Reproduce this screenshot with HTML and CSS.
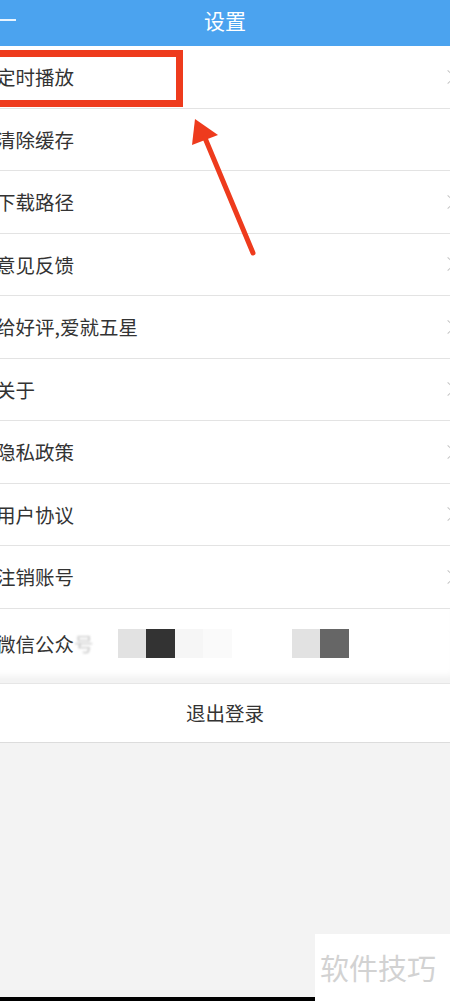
FILE: index.html
```html
<!doctype html>
<html>
    <head>
        <title>设置</title>
        <meta charset="utf-8">
        <link rel="stylesheet" href="styles.css">
    </head>
    <body>
        <div class="screen">
            <div class="topbar">
                <span class="back"></span>
                <h1>设置</h1>
                <span></span>
            </div>
            <ul class="menu">
                <li class="item">定时播放<span class="chev"></span></li>
                <li class="item">清除缓存</li>
                <li class="item">下载路径<span class="chev"></span></li>
                <li class="item">意见反馈<span class="chev"></span></li>
                <li class="item">给好评,爱就五星<span class="chev"></span></li>
                <li class="item">关于<span class="chev"></span></li>
                <li class="item">隐私政策<span class="chev"></span></li>
                <li class="item">用户协议<span class="chev"></span></li>
                <li class="item">注销账号<span class="chev"></span></li>
                <li class="item wechat">
                    <span>微信公众<span class="fade">号</span></span>
                    <span class="mosaic">
                        <i class="m1"></i><i class="m2"></i><i class="m3"></i><i class="m4"></i>
                        <i class="gap"></i>
                        <i class="m1"></i><i class="m5"></i>
                    </span>
                </li>
            </ul>
            <div class="logout">退出登录</div>

            <!-- annotation drawn over the screenshot -->
            <div class="mark"></div>
            <svg class="arrow" width="80" height="150" viewBox="180 110 80 150">
                <polygon points="195,119 192,145 218,135" fill="#ee3b1d"/>
                <line x1="205" y1="138" x2="253" y2="253" stroke="#ee3b1d" stroke-width="5" stroke-linecap="round"/>
            </svg>

            <div class="stamp">软件技巧</div>
            <div class="bar"></div>
        </div>
    </body>
</html>
```

FILE: styles.css
```css
body {
    margin: 0;
    font-family: "Noto Sans CJK SC", "Noto Sans", sans-serif;
}

.screen {
    position: relative;
    width: 450px;
    height: 1001px;
    overflow: hidden;
    background: #f3f3f3;
}

.topbar {
    display: grid;
    grid-template-columns: 1fr auto 1fr;
    align-items: center;
    height: 46px;
    padding-bottom: 6px;
    box-sizing: border-box;
    background: #4ba3ef;
}

.topbar h1 {
    margin: 0;
    color: #fff;
    font-size: 21px;
    font-weight: normal;
    line-height: 1;
}

.back {
    display: block;
    width: 16px;
    height: 2px;
    background: #e8f4ff;
}

.menu {
    margin: 0;
    padding: 0;
    list-style: none;
    background: #fff;
}

.item {
    display: flex;
    align-items: center;
    justify-content: space-between;
    height: 62.5px;
    box-sizing: border-box;
    margin-left: -4px;
    border-bottom: 1px solid #e3e3e3;
    color: #333;
    font-size: 19.5px;
}

.chev {
    width: 9px;
    height: 9px;
    margin-right: 0;
    border-top: 1.5px solid #c4c4c4;
    border-right: 1.5px solid #c4c4c4;
    transform: translateX(3px) rotate(45deg);
}

.wechat {
    justify-content: flex-start;
    height: 70px;
    border-bottom: none;
    box-shadow: inset 0 -8px 8px -6px #eee;
}

.fade {
    color: #c8c8c8;
    filter: blur(1px);
}

.mosaic {
    display: flex;
    margin-left: 24px;
}

.mosaic i {
    display: block;
    width: 28.5px;
    height: 29px;
}

.mosaic .m1 { background: #e2e2e2; }
.mosaic .m2 { background: #333; }
.mosaic .m3 { background: #f6f6f6; }
.mosaic .m4 { background: #fafafa; }
.mosaic .m5 { background: #666; }
.mosaic .gap { width: 60px; }

.logout {
    display: flex;
    align-items: center;
    justify-content: center;
    height: 60px;
    margin-top: 4px;
    background: #fff;
    border-top: 1px solid #e6e6e6;
    border-bottom: 1px solid #dcdcdc;
    box-sizing: border-box;
    color: #333;
    font-size: 19.5px;
}

.mark {
    position: absolute;
    left: -10px;
    top: 50px;
    width: 193px;
    height: 57px;
    box-sizing: border-box;
    border: 7px solid #ee3b1d;
}

.arrow {
    position: absolute;
    left: 180px;
    top: 110px;
}

.stamp {
    position: absolute;
    left: 315px;
    top: 934px;
    width: 135px;
    height: 67px;
    padding-left: 5px;
    box-sizing: border-box;
    background: #fff;
    color: #d2d2d2;
    font-size: 29px;
    line-height: 67px;
}

.bar {
    position: absolute;
    left: 0;
    bottom: 0;
    width: 315px;
    height: 4px;
    background: #000;
}
```
